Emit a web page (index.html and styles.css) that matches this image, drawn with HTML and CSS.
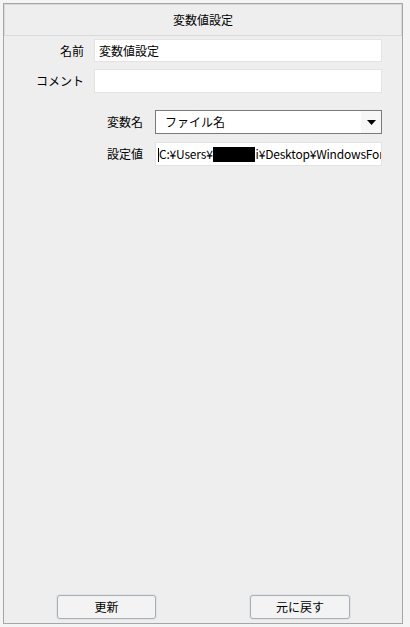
FILE: index.html
```html
<!DOCTYPE html>
<html lang="ja">
<head>
<meta charset="utf-8">
<link rel="stylesheet" href="styles.css">
</head>
<body>
<div class="frame">
  <div class="header">変数値設定</div>
  <div class="form">
    <div class="row">
      <label class="lbl">名前</label>
      <div class="input">変数値設定</div>
    </div>
    <div class="row row2">
      <label class="lbl">コメント</label>
      <div class="input"></div>
    </div>
  </div>
  <div class="form form2">
    <div class="row">
      <label class="lbl">変数名</label>
      <div class="combo"><span class="combo-text">ファイル名</span><span class="arrow"><svg width="9" height="5" viewBox="0 0 9 5"><path d="M0 0h9L4.5 5z" fill="#000"/></svg></span></div>
    </div>
    <div class="row row4">
      <label class="lbl">設定値</label>
      <div class="path"><span class="caret"></span>C:¥Users¥<span class="redact"></span>i¥Desktop¥WindowsFormsApp</div>
    </div>
  </div>
  <div class="spacer"></div>
  <div class="buttons">
    <button class="btn btn1">更新</button>
    <button class="btn btn2">元に戻す</button>
  </div>
</div>
</body>
</html>
```
FILE: styles.css
```css
html, body {
  margin: 0;
  padding: 0;
  background: #f4f4f4;
  font-family: "Noto Sans CJK JP", "Noto Sans", sans-serif;
  font-size: 12px;
  color: #000;
}
.frame {
  margin: 3px 0 0 3px;
  width: 400px;
  height: 621px;
  box-sizing: border-box;
  border: 1px solid #a6a6a6;
  background: #eeeeee;
  display: flex;
  flex-direction: column;
}
.header {
  height: 32px;
  box-sizing: border-box;
  border: 1px solid #d9d9d9;
  display: flex;
  align-items: center;
  justify-content: center;
  line-height: 1;
  padding-bottom: 1px;
}
.form {
  display: flex;
  flex-direction: column;
  padding-top: 3px;
}
.row {
  display: grid;
  grid-template-columns: 80px 288px;
  column-gap: 10px;
  align-items: center;
  height: 23px;
}
.row2 {
  margin-top: 7px;
  height: 24px;
}
.lbl {
  text-align: right;
  line-height: 1;
}
.input {
  height: 100%;
  box-sizing: border-box;
  background: #fff;
  border: 1px solid #e3e3e3;
  display: flex;
  align-items: center;
  padding-left: 4px;
  white-space: nowrap;
  overflow: hidden;
  line-height: 1;
}
.form2 {
  padding-top: 17px;
}
.form2 .row {
  grid-template-columns: 139px 227px;
  column-gap: 12px;
  height: 24px;
}
.row4 {
  margin-top: 8px;
}
.combo {
  height: 100%;
  box-sizing: border-box;
  background: #fff;
  border: 1px solid #7a7a7a;
  display: flex;
  align-items: center;
  line-height: 1;
}
.combo-text {
  flex: 1;
  padding-left: 9px;
}
.arrow {
  width: 20px;
  height: 100%;
  background: #f7f7f7;
  display: flex;
  align-items: center;
  justify-content: center;
}
.arrow svg { display: block; }
.path {
  height: 24px;
  box-sizing: border-box;
  background: #fff;
  border: 1px solid #e3e3e3;
  padding-left: 2px;
  white-space: nowrap;
  overflow: hidden;
  line-height: 22px;
  letter-spacing: -0.2px;
}
.caret {
  display: inline-block;
  width: 1px;
  height: 14px;
  background: #000;
  vertical-align: -3px;
}
.redact {
  display: inline-block;
  width: 42px;
  height: 15px;
  background: #000;
  vertical-align: -3px;
  margin-right: 1px;
}
.spacer { flex: 1; }
.buttons {
  display: flex;
  padding-left: 53px;
  padding-bottom: 4px;
}
.btn {
  height: 24px;
  box-sizing: border-box;
  border: 1px solid #adadad;
  border-radius: 3px;
  background: #f3f3f3;
  box-shadow: 0 0 0 1px #dde5ee;
  font-family: "Noto Sans CJK JP", "Noto Sans", sans-serif;
  font-size: 12px;
  color: #000;
  padding: 0;
  line-height: 1;
}
.btn1 { width: 99px; }
.btn2 { width: 100px; margin-left: 94px; }
```
